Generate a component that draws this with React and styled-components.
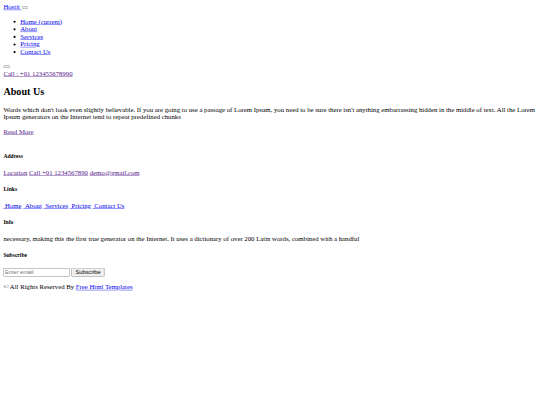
import React from "react";
import styled, { createGlobalStyle } from "styled-components";

// reference was shot at 1280 wide and scaled down to 540
const GlobalStyle = createGlobalStyle`
  html, body {
    margin: 0;
    overflow: hidden;
    background: #fff;
  }
`;

const Page = styled.div`
  width: 1264px;
  padding: 8px;
  transform: scale(0.421875);
  transform-origin: 0 0;
  font-family: "Liberation Serif", "Times New Roman", serif;
  font-size: 16px;
  color: #000;
`;

const Link = styled.a`
  color: ${({ $visited }) => ($visited ? "#551a8b" : "#0000ee")};
  text-decoration: underline;
  cursor: pointer;
`;

const Toggler = styled.button`
  font-size: 13.333px;
  vertical-align: middle;
`;

const NavList = styled.ul`
  margin: 16px 0;
  padding-left: 40px;
  list-style: disc;
`;

const SearchForm = styled.form`
  margin: 0;
`;

const SectionTitle = styled.h2`
  font-size: 1.5em;
  font-weight: bold;
  margin: 0.83em 0;
`;

const Text = styled.p`
  margin: 1em 0;
`;

const Footer = styled.footer`
  padding-top: 19px;
`;

const FooterTitle = styled.h5`
  font-size: 0.83em;
  font-weight: bold;
  margin: 1.67em 0;
`;

const SubscribeForm = styled.form`
  margin-top: 2px;
`;

const EmailInput = styled.input`
  box-sizing: border-box;
  width: 157px;
  font-family: "Liberation Sans", Arial, sans-serif;
  font-size: 13.333px;
`;

const SubmitButton = styled.button`
  font-family: "Liberation Sans", Arial, sans-serif;
  font-size: 13.333px;
  padding: 1px 8px;
`;

const navItems = ["Home (current)", "About", "Services", "Pricing", "Contact Us"];
const footerLinks = ["Home", "About", "Services", "Pricing", "Contact Us"];

export default function App() {
  return (
    <>
      <GlobalStyle />
      <Page>
        <header>
          <nav>
            <Link href="#">Hostit </Link>
            <Toggler type="button"></Toggler>
            <div>
              <NavList>
                {navItems.map((item) => (
                  <li key={item}>
                    <Link href="#">{item}</Link>
                  </li>
                ))}
              </NavList>
              <SearchForm>
                <Toggler type="submit"></Toggler>
              </SearchForm>
              <div>
                <Link href="#" $visited>
                  Call : +01 123455678990
                </Link>
              </div>
            </div>
          </nav>
        </header>

        <section>
          <SectionTitle>About Us</SectionTitle>
          <Text>
            Words which don't look even slightly believable. If you are going
            to use a passage of Lorem Ipsum, you need to be sure there isn't
            anything embarrassing hidden in the middle of text. All the Lorem
            Ipsum generators on the Internet tend to repeat predefined chunks
          </Text>
          <Link href="#" $visited>
            Read More
          </Link>
        </section>

        <Footer>
          <FooterTitle>Address</FooterTitle>
          <Text>
            <Link href="#" $visited>
              Location
            </Link>{" "}
            <Link href="#" $visited>
              Call +01 1234567890
            </Link>{" "}
            <Link href="#" $visited>
              demo@gmail.com
            </Link>
          </Text>

          <FooterTitle>Links</FooterTitle>
          <Text>
            {footerLinks.map((item, i) => (
              <React.Fragment key={item}>
                {i > 0 && " "}
                <Link href="#">{"\u00a0" + item}</Link>
              </React.Fragment>
            ))}
          </Text>

          <FooterTitle>Info</FooterTitle>
          <Text>
            necessary, making this the first true generator on the Internet. It
            uses a dictionary of over 200 Latin words, combined with a handful
          </Text>

          <FooterTitle>Subscribe</FooterTitle>
          <SubscribeForm>
            <EmailInput type="email" placeholder="Enter email" />{" "}
            <SubmitButton type="submit">Subscribe</SubmitButton>
          </SubscribeForm>

          <Text>
            © All Rights Reserved By <Link href="#">Free Html Templates</Link>
          </Text>
        </Footer>
      </Page>
    </>
  );
}
